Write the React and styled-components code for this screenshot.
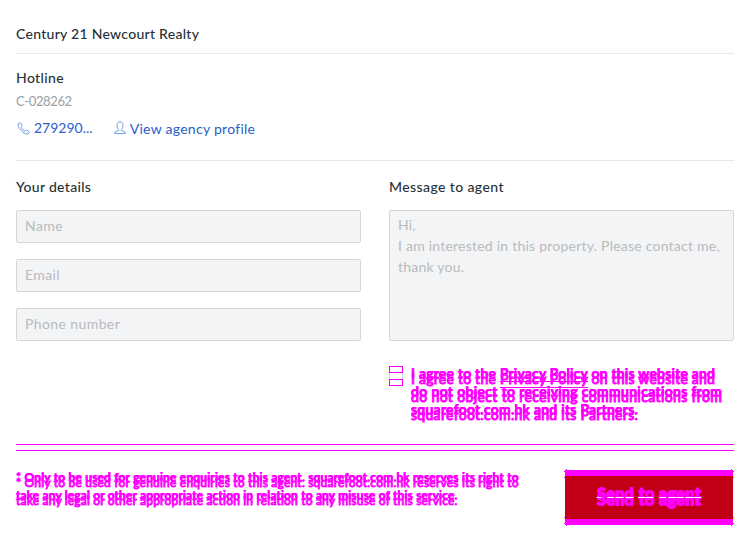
import React from 'react';
import styled, { createGlobalStyle } from 'styled-components';

const MARK = '#ff00ff';

const Global = createGlobalStyle`
  * { box-sizing: border-box; }
  body { margin: 0; background: #fff; }
`;

const Page = styled.main`
  height: 544px;
  padding: 0 16px;
  overflow: hidden;
  color: #263238;
  font-family: Lato, "Liberation Sans", sans-serif;
  font-size: 14px;
  line-height: 20px;
`;

const Line = styled.span`
  display: block;
  white-space: nowrap;
  letter-spacing: ${(p) => p.$spacing}px;
`;

const Heading = styled.h2`
  margin: 0;
  font-size: 14px;
  font-weight: 500;
  line-height: 20px;
  letter-spacing: ${(p) => p.$spacing}px;
`;

const Header = styled.header`
  height: 54px;
  padding-top: 24px;
  border-bottom: 1px solid #e8eaea;
`;

const Agent = styled.section`
  height: 107px;
  padding-top: 14px;
  border-bottom: 1px solid #e8eaea;
`;

const Licence = styled.div`
  color: #97a0a6;
  font-size: 13px;
  line-height: 26px;
  letter-spacing: -0.38px;
`;

const Contacts = styled.div`
  display: flex;
  align-items: flex-start;
  gap: 21px;
  margin-top: 4px;
`;

const ContactLink = styled.a`
  display: flex;
  gap: ${(p) => p.$gap}px;
  padding-top: ${(p) => p.$drop || 0}px;
  color: #2860cc;

  svg {
    flex: none;
    margin-top: ${(p) => p.$iconTop}px;
    fill: none;
    stroke: #6b9be2;
    stroke-width: 1;
    stroke-linejoin: round;
  }
`;

const Form = styled.form`
  display: grid;
  grid-template-columns: 345px 345px;
  gap: 28px;
  padding-top: 16px;
`;

const Fields = styled.div`
  display: grid;
  gap: 16px;
  margin-top: 13px;
`;

const Input = styled.input`
  width: 100%;
  height: 33px;
  padding: 0 8px 2px;
  border: 1px solid #d5d7d8;
  border-radius: 2px;
  background: #f2f4f6;
  font: 400 14px/20px Lato, "Liberation Sans", sans-serif;
  letter-spacing: 0.4px;
  outline: none;

  &::placeholder { color: #b9bbbc; opacity: 1; }
`;

const Message = styled.div`
  height: 131px;
  margin-top: 13px;
  padding: 3px 8px;
  border: 1px solid #d5d7d8;
  border-radius: 2px;
  background: #f2f4f6;
  color: #b9bbbc;
  line-height: 21px;
`;

const Consent = styled.label`
  display: flex;
  gap: 8px;
  margin: 29px 0 0 373px;
`;

const Check = styled.span`
  flex: none;
  width: 14px;
  height: 20px;
  margin-top: -4px;
  display: grid;
  grid-template-rows: 7px 6px 7px;
`;

const CheckBand = styled.i`
  border: solid ${(p) => (p.$mark ? MARK : '#d5d7d8')};
  border-width: ${(p) => (p.$mark ? '1px' : '0 1px')};
`;

const Ghosted = styled.div`
  color: ${MARK};
  font-size: ${(p) => p.$size}px;
  font-weight: 500;
  line-height: 18px;
  text-shadow:
    -0.5px -6px 0 ${MARK},
    0.5px -6px 0 ${MARK},
    0 -6.5px 0 ${MARK},
    0 -5.5px 0 ${MARK};
  -webkit-text-stroke: ${(p) => p.$stroke}px ${MARK};
`;

const PolicyLink = styled.a`
  border-bottom: 1px solid ${MARK};
  background: linear-gradient(${MARK}, ${MARK}) 0 calc(100% - 5px) / 100% 1px no-repeat;
`;

const Rules = styled.div`
  height: 7px;
  margin-top: 20px;
  border: solid ${MARK};
  border-width: 1px 0;
`;

const Footer = styled.footer`
  display: flex;
  justify-content: space-between;
  align-items: flex-start;
  padding-top: 18px;
`;

const Disclaimer = styled(Ghosted)`
  padding-top: 5px;
`;

const dot = (x, y) => `linear-gradient(${MARK}, ${MARK}) ${x} ${y} / 1px 1px no-repeat`;

const Send = styled.button`
  display: flex;
  justify-content: center;
  align-items: flex-start;
  width: 170px;
  height: 57px;
  margin: 0;
  padding: 0;
  border: 0;
  background:
    ${dot('0', '2px')}, ${dot('0', '8px')}, ${dot('0', '48px')}, ${dot('0', '54px')},
    ${dot('169px', '2px')}, ${dot('169px', '8px')}, ${dot('169px', '48px')}, ${dot('169px', '54px')},
    ${dot('2px', '0')}, ${dot('167px', '0')}, ${dot('2px', '56px')}, ${dot('167px', '56px')},
    linear-gradient(${MARK} 6px, #c10015 6px, #c10015 49px, ${MARK} 49px) 1px 1px / 168px 55px no-repeat;
  font: 600 16px/20px Lato, "Liberation Sans", sans-serif;
`;

const SendText = styled.span`
  display: block;
  margin-top: 18px;
  padding: 2px 2px 4px;
  letter-spacing: 0.5px;
  color: transparent;
  background: linear-gradient(${MARK} 10px, #fff 10px, #fff 11px, ${MARK} 11px);
  -webkit-background-clip: text;
  background-clip: text;
  -webkit-text-stroke: 2px transparent;
  filter: drop-shadow(0 -6px 0 ${MARK});
`;

const PhoneIcon = () => (
  <svg width="14" height="13" viewBox="-1 0 14 13">
    <path d="M3 .9 1.3 1.8C.7 3.3 1.5 5.5 4 8.3c2.8 2.9 5.1 4.2 7 3.8l1.3-1.5c.2-.4.1-.7-.2-.9L9.8 8.2c-.4-.2-.7-.1-.9.2l-.8.9C7 9 4.4 6.2 4.1 5.3l.8-.8c.3-.3.3-.6.1-.9L3.8 1.2C3.6.8 3.3.7 3 .9Z" />
  </svg>
);

const PersonIcon = () => (
  <svg width="12" height="14" viewBox="0 0 12 14">
    <path d="M4.5 8.5C3.2 7.3 3 5.8 3.2 3.5 3.4 1.7 4.3.8 6 .8s2.6.9 2.8 2.7c.2 2.3 0 3.8-1.3 5v1l2.7.9c.8.3 1.2 1 1.2 2.1H.6c0-1.1.4-1.8 1.2-2.1l2.7-.9Z" />
  </svg>
);

export default function App() {
  return (
    <Page>
      <Global />
      <Header>
        <Heading $spacing={0.28}>Century 21 Newcourt Realty</Heading>
      </Header>
      <Agent>
        <Heading $spacing={0.38}>Hotline</Heading>
        <Licence>C-028262</Licence>
        <Contacts>
          <ContactLink $gap={4} $iconTop={4}>
            <PhoneIcon />
            <Line $spacing={0}>279290...</Line>
          </ContactLink>
          <ContactLink $gap={4} $drop={1} $iconTop={2}>
            <PersonIcon />
            <Line $spacing={0.28}>View agency profile</Line>
          </ContactLink>
        </Contacts>
      </Agent>
      <Form>
        <div>
          <Heading $spacing={0.3}>Your details</Heading>
          <Fields>
            <Input placeholder="Name" />
            <Input placeholder="Email" />
            <Input placeholder="Phone number" />
          </Fields>
        </div>
        <div>
          <Heading $spacing={0.4}>Message to agent</Heading>
          <Message>
            <Line $spacing={0.2}>Hi,</Line>
            <Line $spacing={0.23}>I am interested in this property. Please contact me,</Line>
            <Line $spacing={0.23}>thank you.</Line>
          </Message>
        </div>
      </Form>
      <Consent>
        <Check>
          <CheckBand $mark />
          <CheckBand />
          <CheckBand $mark />
        </Check>
        <Ghosted $size={14} $stroke={0.9}>
          <Line $spacing={0.23}>
            I agree to the <PolicyLink>Privacy Policy</PolicyLink> on this website and
          </Line>
          <Line $spacing={0.36}>do not object to receiving communications from</Line>
          <Line $spacing={0.28}>squarefoot.com.hk and its Partners.</Line>
        </Ghosted>
      </Consent>
      <Rules />
      <Footer>
        <Disclaimer $size={12} $stroke={0.8}>
          <Line $spacing={0.21}>* Only to be used for genuine enquiries to this agent. squarefoot.com.hk reserves its right to</Line>
          <Line $spacing={0.18}>take any legal or other appropriate action in relation to any misuse of this service.</Line>
        </Disclaimer>
        <Send type="button">
          <SendText>Send to agent</SendText>
        </Send>
      </Footer>
    </Page>
  );
}
